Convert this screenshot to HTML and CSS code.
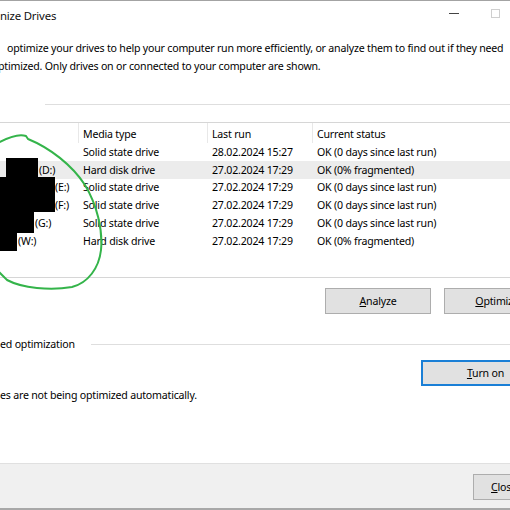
FILE: index.html
```html
<!DOCTYPE html>
<html lang="en">
<head>
<meta charset="utf-8">
<title>Optimize Drives</title>
<link rel="stylesheet" href="styles.css">
</head>
<body>
<div class="window">
  <div class="titlebar">
    <span class="title">nize Drives</span>
    <span class="min-dash"></span>
    <span class="max-box"></span>
  </div>

  <p class="desc">
    <span class="l1">optimize your drives to help your computer run more efficiently, or analyze them to find out if they need</span>
    <span class="l2">ptimized. Only drives on or connected to your computer are shown.</span>
  </p>

  <div class="status-rule"></div>

  <div class="list">
    <div class="lrow head">
      <span class="cell sep"></span>
      <span class="cell sep">Media type</span>
      <span class="cell sep">Last run</span>
      <span class="cell">Current status</span>
    </div>
    <div class="lrow">
      <span class="cell"></span>
      <span class="cell">Solid state drive</span>
      <span class="cell">28.02.2024 15:27</span>
      <span class="cell">OK (0 days since last run)</span>
    </div>
    <div class="lrow sel">
      <span class="cell"><span class="nm" style="width:35px"></span>(D:)</span>
      <span class="cell">Hard disk drive</span>
      <span class="cell">27.02.2024 17:29</span>
      <span class="cell">OK (0% fragmented)</span>
    </div>
    <div class="lrow">
      <span class="cell"><span class="nm" style="width:51px"></span>(E:)</span>
      <span class="cell">Solid state drive</span>
      <span class="cell">27.02.2024 17:29</span>
      <span class="cell">OK (0 days since last run)</span>
    </div>
    <div class="lrow">
      <span class="cell"><span class="nm" style="width:51px"></span>(F:)</span>
      <span class="cell">Solid state drive</span>
      <span class="cell">27.02.2024 17:29</span>
      <span class="cell">OK (0 days since last run)</span>
    </div>
    <div class="lrow">
      <span class="cell"><span class="nm" style="width:31px"></span>(G:)</span>
      <span class="cell">Solid state drive</span>
      <span class="cell">27.02.2024 17:29</span>
      <span class="cell">OK (0 days since last run)</span>
    </div>
    <div class="lrow">
      <span class="cell"><span class="nm" style="width:14px"></span>(W:)</span>
      <span class="cell">Hard disk drive</span>
      <span class="cell">27.02.2024 17:29</span>
      <span class="cell">OK (0% fragmented)</span>
    </div>
  </div>

  <div class="actions">
    <button class="btn"><u>A</u>nalyze</button>
    <button class="btn"><u>O</u>ptimize</button>
  </div>

  <div class="sched-head">
    <span class="sched-label">ed optimization</span>
    <span class="sched-rule"></span>
  </div>

  <div class="sched-btn-row">
    <button class="btn btn-turn"><u>T</u>urn on</button>
  </div>
  <p class="sched-text">es are not being optimized automatically.</p>

  <div class="spacer"></div>

  <div class="footer">
    <button class="btn btn-close"><u>C</u>lose</button>
  </div>

  <svg class="annot" width="120" height="300" viewBox="0 0 120 300">
    <path d="M6 158 H38 V177 H55 V212 H34 V233 H17 V251 H0 V177 H6 Z" fill="#000"/>
    <path d="M-2 143 C 9 137, 20 134, 26 136 L 28 139 C 50 148, 72 165, 85 185 C 97 205, 103 230, 101 250 C 99 268, 88 283, 72 287 C 50 291, 22 288, 7 280 L -1 272"
          fill="none" stroke="#34b44a" stroke-width="2" stroke-linecap="round"/>
  </svg>
</div>
</body>
</html>
```

FILE: styles.css
```css
html, body {
  margin: 0;
  padding: 0;
  width: 510px;
  height: 510px;
  overflow: hidden;
  background: #ffffff;
}

body {
  font-family: "Noto Sans", "Open Sans", sans-serif;
  font-size: 10.6px;
  letter-spacing: -0.2px;
  color: #000;
}

.window {
  position: relative;
  width: 562px;
  height: 510px;
  box-sizing: border-box;
  border-top: 1px solid #a3a3a3;
  border-bottom: 2px solid #a8a8a8;
  display: flex;
  flex-direction: column;
  background: #fff;
}

.titlebar {
  height: 30px;
  display: flex;
  align-items: center;
}

.title {
  flex: 0 0 449px;
  font-size: 11.4px;
  color: #111;
  margin-top: -2px;
}

.min-dash {
  width: 10px;
  height: 1px;
  background: #444;
  margin-top: -5px;
}

.max-box {
  width: 7px;
  height: 7px;
  border: 1px solid #cfcfcf;
  margin-left: 32px;
  margin-top: -5px;
}

.desc {
  margin: 8px 0 0;
  line-height: 18px;
}

.desc .l1 {
  display: block;
  padding-left: 7px;
  white-space: nowrap;
}

.desc .l2 {
  display: block;
  text-indent: -2px;
  white-space: nowrap;
}

.status-rule {
  margin: 29px 0 0 45px;
  border-top: 1px solid #dedede;
}

.list {
  margin-top: 17px;
  height: 156px;
  box-sizing: border-box;
  border-top: 1px solid #d6d6d6;
  border-bottom: 1px solid #d6d6d6;
}

.lrow {
  display: grid;
  grid-template-columns: 79px 129px 105px 1fr;
  height: 17.8px;
  align-items: center;
}

.lrow.head {
  height: 20px;
  align-items: stretch;
}

.lrow.head .cell {
  display: flex;
  align-items: center;
  padding-top: 2px;
  box-sizing: border-box;
}

.lrow.sel {
  background: #ececec;
}

.cell {
  padding-left: 4px;
  white-space: nowrap;
  display: flex;
  align-items: center;
  height: 100%;
}

.cell.sep {
  border-right: 1px solid #e8e8e8;
}

.nm {
  display: inline-block;
  height: 1px;
}

.actions {
  margin-top: 10px;
  display: flex;
  justify-content: flex-end;
  gap: 13px;
  padding-right: 12px;
}

.btn {
  width: 106px;
  height: 26px;
  box-sizing: border-box;
  border: 1px solid #adadad;
  background: #e1e1e1;
  font-family: "Noto Sans", "Open Sans", sans-serif;
  font-size: 10.6px;
  letter-spacing: -0.2px;
  color: #000;
  padding: 0;
}

.sched-head {
  margin-top: 21px;
  height: 18px;
  display: flex;
  align-items: center;
}

.sched-label {
  white-space: nowrap;
}

.sched-rule {
  flex: 1;
  margin-left: 16px;
  border-top: 1px solid #dedede;
}

.sched-btn-row {
  margin-top: 7px;
  display: flex;
  justify-content: flex-end;
  padding-right: 12px;
}

.btn-turn {
  width: 129px;
  border: 2px solid #1a7fd6;
}

.sched-text {
  margin: 0;
  line-height: 18px;
  white-space: nowrap;
}

.spacer {
  flex: 1;
}

.footer {
  height: 45px;
  box-sizing: border-box;
  border-top: 1px solid #e0e0e0;
  background: #f0f0f0;
  padding-top: 10px;
  display: flex;
  justify-content: flex-end;
  padding-right: 27px;
}

.btn-close {
  width: 62px;
}

.annot {
  position: absolute;
  left: 0;
  top: -1px;
  pointer-events: none;
  overflow: visible;
}
```
